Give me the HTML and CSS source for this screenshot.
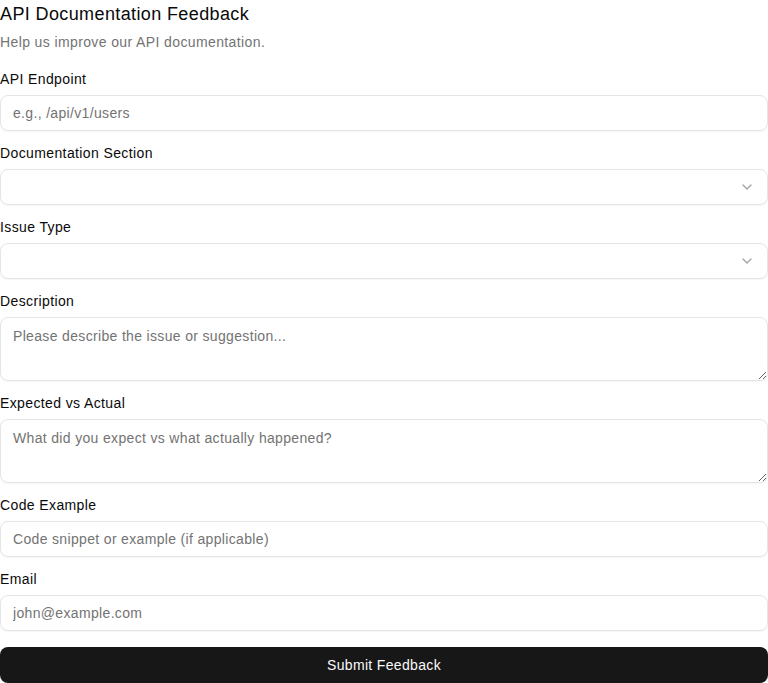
FILE: index.html
```html
<!DOCTYPE html>
<html lang="en">
<head>
<meta charset="utf-8">
<title>API Documentation Feedback</title>
<link rel="stylesheet" href="styles.css">
</head>
<body>
<div class="card">
  <div class="header">
    <h2 class="title">API Documentation Feedback</h2>
    <p class="subtitle">Help us improve our API documentation.</p>
  </div>
  <form class="form">
    <div class="field">
      <label class="label" for="endpoint">API Endpoint</label>
      <input class="input" id="endpoint" type="text" placeholder="e.g., /api/v1/users">
    </div>
    <div class="field">
      <label class="label">Documentation Section</label>
      <button type="button" class="select">
        <span></span>
        <svg class="chev" width="16" height="16" viewBox="0 0 24 24" fill="none" stroke="currentColor" stroke-width="2" stroke-linecap="round" stroke-linejoin="round"><path d="m6 9 6 6 6-6"/></svg>
      </button>
    </div>
    <div class="field">
      <label class="label">Issue Type</label>
      <button type="button" class="select">
        <span></span>
        <svg class="chev" width="16" height="16" viewBox="0 0 24 24" fill="none" stroke="currentColor" stroke-width="2" stroke-linecap="round" stroke-linejoin="round"><path d="m6 9 6 6 6-6"/></svg>
      </button>
    </div>
    <div class="field">
      <label class="label" for="desc">Description</label>
      <textarea class="textarea" id="desc" placeholder="Please describe the issue or suggestion..."></textarea>
    </div>
    <div class="field">
      <label class="label" for="expected">Expected vs Actual</label>
      <textarea class="textarea" id="expected" placeholder="What did you expect vs what actually happened?"></textarea>
    </div>
    <div class="field">
      <label class="label" for="code">Code Example</label>
      <input class="input" id="code" type="text" placeholder="Code snippet or example (if applicable)">
    </div>
    <div class="field">
      <label class="label" for="email">Email</label>
      <input class="input" id="email" type="email" placeholder="john@example.com">
    </div>
    <button type="submit" class="submit">Submit Feedback</button>
  </form>
</div>
</body>
</html>
```
FILE: styles.css
```css
* { box-sizing: border-box; }
html, body {
  margin: 0;
  padding: 0;
  background: #ffffff;
}
body {
  font-family: "Liberation Sans", Arial, Helvetica, sans-serif;
  letter-spacing: 0.024em;
  color: #0a0a0a;
  width: 768px;
}
.card {
  display: flex;
  flex-direction: column;
}
.header {
  display: flex;
  flex-direction: column;
  gap: 4px;
  margin-bottom: 17px;
}
.title {
  margin: 0;
  font-size: 18px;
  line-height: 28px;
  font-weight: 400;
  color: #0a0a0a;
}
.subtitle {
  margin: 0;
  font-size: 14px;
  line-height: 20px;
  color: #737373;
}
.form {
  display: flex;
  flex-direction: column;
  gap: 12px;
}
.field {
  display: flex;
  flex-direction: column;
  gap: 6px;
}
.label {
  font-size: 14px;
  line-height: 20px;
  font-weight: 400;
  color: #0a0a0a;
}
.input, .select, .textarea {
  width: 100%;
  border: 1px solid #e5e5e5;
  border-radius: 8px;
  background: #ffffff;
  font-family: "Liberation Sans", Arial, Helvetica, sans-serif;
  letter-spacing: 0.024em;
  font-size: 14px;
  line-height: 20px;
  color: #0a0a0a;
  box-shadow: 0 1px 2px rgba(0,0,0,0.04);
  outline: none;
  margin: 0;
}
.input {
  height: 36px;
  padding: 0 12px;
}
.input::placeholder, .textarea::placeholder {
  color: #737373;
  opacity: 1;
}
.select {
  height: 36px;
  padding: 0 12px;
  display: flex;
  align-items: center;
  justify-content: space-between;
  cursor: pointer;
}
.chev {
  color: #a3a3a3;
  display: block;
}
.textarea {
  height: 64px;
  padding: 8px 12px;
  resize: vertical;
  display: block;
}
.submit {
  margin-top: 4px;
  height: 36px;
  width: 100%;
  border: none;
  border-radius: 8px;
  background: #171717;
  color: #fafafa;
  font-family: "Liberation Sans", Arial, Helvetica, sans-serif;
  letter-spacing: 0.024em;
  font-size: 14px;
  font-weight: 500;
  cursor: pointer;
}
```
